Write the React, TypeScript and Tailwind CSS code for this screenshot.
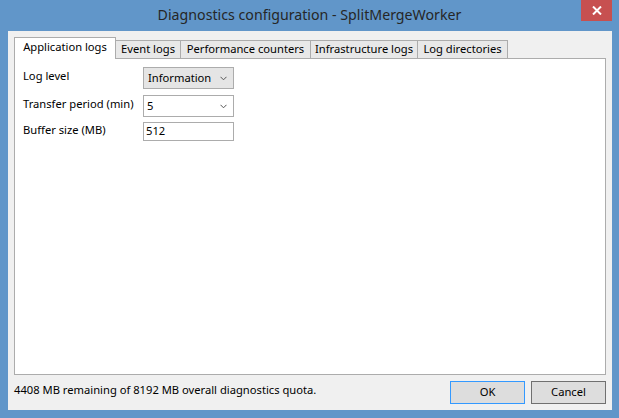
import React from "react";

const font = { fontFamily: '"Noto Sans", "Open Sans", sans-serif' };

function Chevron() {
  return (
    <svg width="7" height="5" viewBox="0 0 7 5" className="shrink-0">
      <path d="M0.5 0.8 L3.5 3.8 L6.5 0.8" fill="none" stroke="#555" strokeWidth="1" />
    </svg>
  );
}

export default function App() {
  const tabs = [
    { label: "Event logs", w: "w-[66px]" },
    { label: "Performance counters", w: "w-[131px]" },
    { label: "Infrastructure logs", w: "w-[108px]" },
    { label: "Log directories", w: "w-[91px]" },
  ];
  return (
    <div
      className="w-[619px] h-[418px] bg-[#6196c9] flex flex-col text-[11.2px] text-[#000] overflow-hidden"
      style={font}
    >
      {/* title bar */}
      <div className="h-[31px] flex items-start relative shrink-0">
        <div className="flex-1 h-[31px] flex items-center justify-center text-[14.2px] text-[#262626] pb-[1px]">
          Diagnostics configuration - SplitMergeWorker
        </div>
        <div className="absolute right-[7px] top-0 w-[31px] h-[21px] bg-[#c75050] flex items-center justify-center">
          <svg width="10" height="9" viewBox="0 0 10 9">
            <path d="M1 0.5 L9 8.5 M9 0.5 L1 8.5" stroke="#fff" strokeWidth="2" />
          </svg>
        </div>
      </div>
      {/* client */}
      <div className="flex-1 ml-[8px] mr-[7px] mb-[8px] bg-[#f0f0f0] flex flex-col px-[6px] pt-[6px]">
        {/* tab strip */}
        <div className="flex items-end h-[21px] relative z-10">
          <div className="w-[102px] h-[22px] -mb-px bg-white border border-b-0 border-[#acacac] flex items-center justify-center pb-[2px]">
            Application logs
          </div>
          {tabs.map((t) => (
            <div
              key={t.label}
              className={`${t.w} h-[18px] -ml-px bg-[#e8e8e8] border border-b-0 border-[#acacac] flex items-center justify-center whitespace-nowrap`}
            >
              {t.label}
            </div>
          ))}
        </div>
        {/* panel */}
        <div className="h-[317px] bg-white border border-[#acacac] flex flex-col pl-[8px] pt-[8px]">
          <div className="flex items-center h-[22px]">
            <div className="w-[120px] pb-[4px]">Log level</div>
            <div className="w-[91px] h-[22px] bg-[#e5e5e5] border border-[#acacac] flex items-center justify-between pl-[4px] pr-[6px]">
              <span>Information</span>
              <Chevron />
            </div>
          </div>
          <div className="flex items-center h-[22px] mt-[6px]">
            <div className="w-[120px] pb-[4px]">Transfer period (min)</div>
            <div className="w-[91px] h-[22px] bg-white border border-[#acacac] flex items-center justify-between pl-[3px] pr-[6px]">
              <span>5</span>
              <Chevron />
            </div>
          </div>
          <div className="flex items-center h-[19px] mt-[5px]">
            <div className="w-[120px] pb-[2px]">Buffer size (MB)</div>
            <div className="w-[91px] h-[19px] bg-white border border-[#acacac] flex items-center pl-[2px]">
              512
            </div>
          </div>
        </div>
        {/* bottom */}
        <div className="flex-1 flex items-start pt-[6px]">
          <div className="flex-1 pt-[1px]">4408 MB remaining of 8192 MB overall diagnostics quota.</div>
          <div className="w-[75px] h-[23px] bg-[#dddddd] border border-[#3399ff] flex items-center justify-center">
            OK
          </div>
          <div className="w-[75px] h-[23px] ml-[6px] bg-[#dddddd] border border-[#707070] flex items-center justify-center">
            Cancel
          </div>
        </div>
      </div>
    </div>
  );
}
